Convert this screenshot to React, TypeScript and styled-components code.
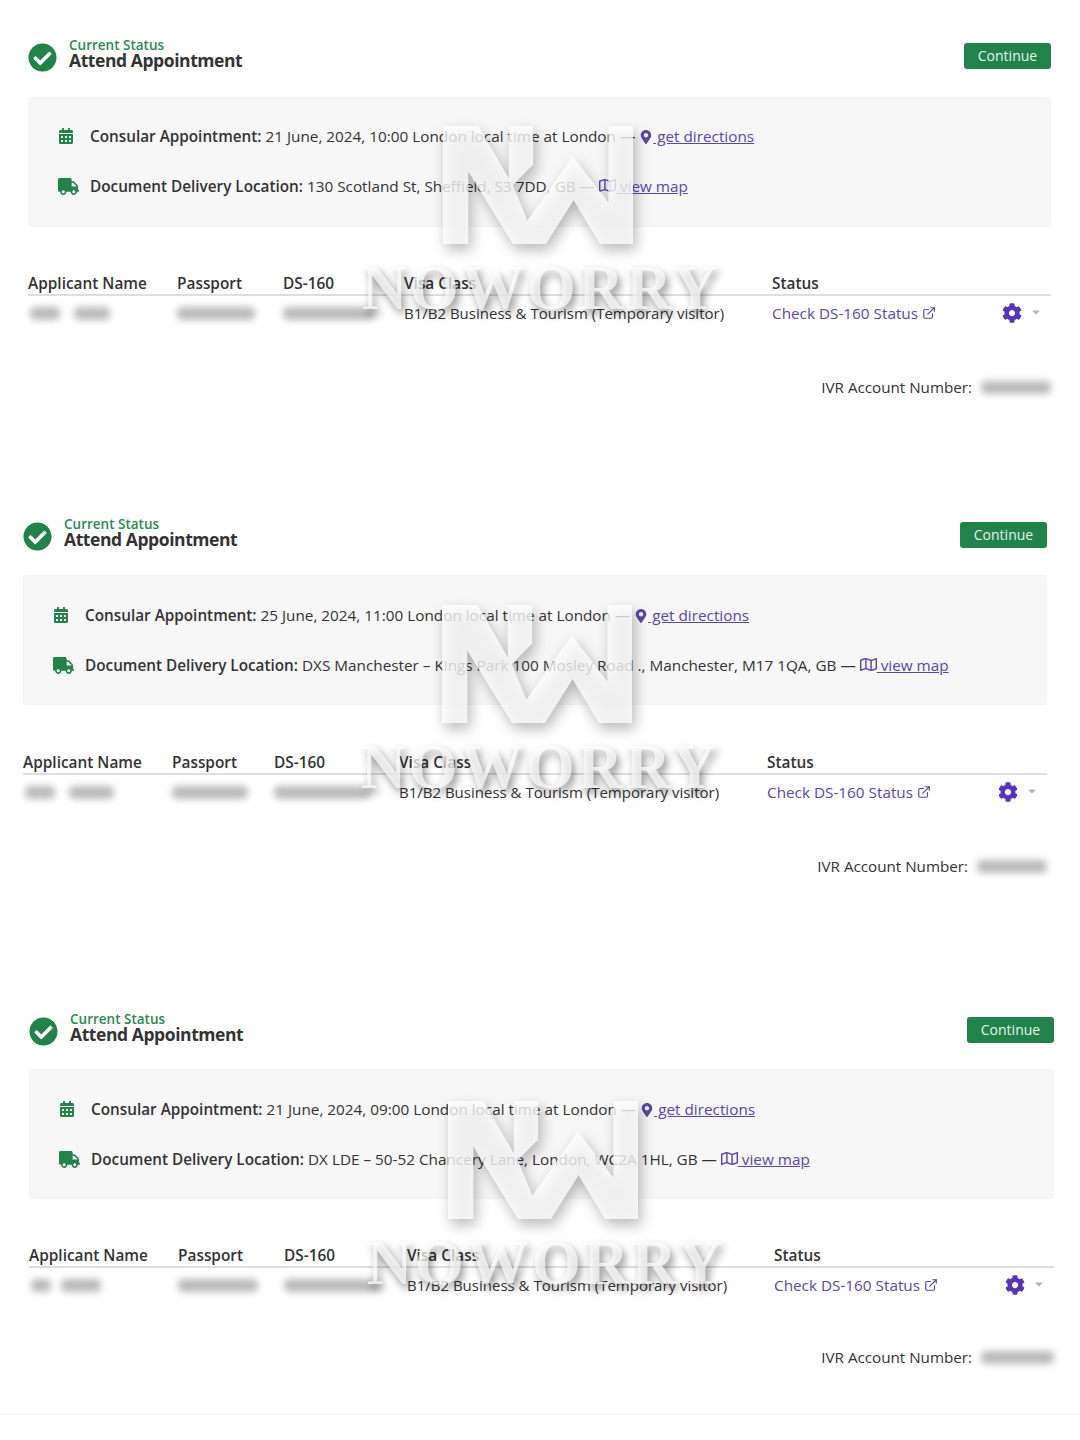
import React from "react";
import styled, { createGlobalStyle } from "styled-components";
import {
  FaCalendarAlt,
  FaCaretDown,
  FaCheckCircle,
  FaCog,
  FaMapMarkerAlt,
  FaRegMap,
  FaTruck,
} from "react-icons/fa";
import { ExternalLink } from "lucide-react";

const GlobalStyle = createGlobalStyle`
  html, body {
    margin: 0;
    padding: 0;
    background: #fff;
  }
  body {
    font-family: "Open Sans", "Noto Sans", sans-serif;
    color: #333;
  }
`;

const StyledPage = styled.div`
  position: relative;
  width: 1080px;
  height: 1440px;
  overflow: hidden;
  padding-top: 38px;
  box-sizing: border-box;
`;

const StyledSection = styled.section<{ $left: number; $width: number; $height: number }>`
  position: relative;
  margin-left: ${(p) => p.$left}px;
  width: ${(p) => p.$width}px;
  height: ${(p) => p.$height}px;
`;

const StyledHeader = styled.div`
  display: flex;
  align-items: center;
  justify-content: space-between;
  height: 38px;
`;

const StyledHeading = styled.div`
  display: flex;
  align-items: center;
  gap: 12px;
  color: #21824a;
`;

const StyledTitleBlock = styled.div`
  display: flex;
  flex-direction: column;
  padding-bottom: 7px;
`;

const StyledEyebrow = styled.span`
  font-size: 13.5px;
  line-height: 13px;
  font-weight: 600;
  color: #2b8a52;
`;

const StyledTitle = styled.span`
  font-size: 17.5px;
  line-height: 17px;
  font-weight: 700;
  letter-spacing: -0.42px;
  color: #333;
`;

const StyledButton = styled.button`
  width: 87px;
  height: 26px;
  border: 0;
  border-radius: 3px;
  background: #21824a;
  color: #e6f5ea;
  font: 400 14px "Open Sans", sans-serif;
  padding: 0;
  margin-top: -3px;
`;

const StyledPanel = styled.div<{ $top: number; $pad: number }>`
  margin-top: ${(p) => p.$top}px;
  height: 130px;
  box-sizing: border-box;
  padding: ${(p) => p.$pad}px 29px 0;
  background: #f7f7f7;
  border: 1px solid #f3f3f3;
  border-radius: 4px;
  display: flex;
  flex-direction: column;
  gap: 16px;
`;

const StyledInfoRow = styled.div`
  display: flex;
  align-items: center;
  height: 34px;
  font-size: 15.3px;
  white-space: pre;
`;

const StyledInfoIcon = styled.span`
  display: flex;
  width: 32px;
  color: #21824a;
  font-size: 16px;
`;

const StyledInfoIconWide = styled(StyledInfoIcon)`
  font-size: 21px;
`;

const StyledStrong = styled.strong`
  font-weight: 600;
`;

const StyledLink = styled.span<{ $iconSize: number }>`
  color: #5a45b0;
  text-decoration: underline;
  svg {
    font-size: ${(p) => p.$iconSize}px;
    vertical-align: -2px;
  }
`;

const StyledTable = styled.div<{ $cols: string; $top: number }>`
  margin-top: ${(p) => p.$top}px;
  display: grid;
  grid-template-columns: ${(p) => p.$cols};
  font-size: 15px;
`;

const StyledHeadCell = styled.div`
  height: 23px;
  line-height: 25px;
  font-weight: 600;
  font-size: 15.4px;
  border-bottom: 2px solid #dedede;
`;

const StyledCell = styled.div`
  height: 34px;
  display: flex;
  align-items: center;
  white-space: nowrap;
`;

const StyledStatusCell = styled(StyledCell)`
  justify-content: space-between;
  color: #5a45b0;
  padding-right: 9px;
`;

const StyledStatusLink = styled.span`
  display: flex;
  align-items: center;
  gap: 4px;
  font-size: 15.3px;
`;

const StyledActions = styled.span`
  display: flex;
  align-items: center;
  gap: 8px;
  color: #5633b8;
  font-size: 20px;
`;

const StyledCaret = styled.span`
  display: flex;
  color: #b5b5b5;
  font-size: 12px;
  margin-top: -2px;
`;

const StyledBlur = styled.span<{ $width: number }>`
  display: inline-block;
  width: ${(p) => p.$width}px;
  height: 13px;
  background: #bababa;
  border-radius: 5px;
  filter: blur(3.5px);
`;

const StyledBlurGroup = styled.span<{ $gap: number }>`
  display: flex;
  gap: ${(p) => p.$gap}px;
  padding-left: 2px;
`;

const StyledIvr = styled.div<{ $top: number }>`
  margin-top: ${(p) => p.$top}px;
  display: flex;
  justify-content: flex-end;
  align-items: center;
  gap: 9px;
  font-size: 15.2px;
`;

const StyledMark = styled.div<{ $left: number; $top: number }>`
  position: absolute;
  left: ${(p) => p.$left}px;
  top: ${(p) => p.$top}px;
  width: 360px;
  display: flex;
  flex-direction: column;
  align-items: center;
  pointer-events: none;
`;

const StyledLogo = styled.svg`
  width: 190px;
  height: 120px;
  margin-right: 7px;
  filter: drop-shadow(3px 6px 7px rgba(0, 0, 0, 0.35));
`;

const StyledMarkText = styled.div`
  margin-top: 13px;
  font: 700 63px/60px "Liberation Serif", serif;
  letter-spacing: 2.5px;
  color: rgba(255, 255, 255, 0.72);
  text-shadow: 3px 5px 8px rgba(0, 0, 0, 0.42);
  white-space: nowrap;
`;

const StyledFooterRule = styled.div`
  position: absolute;
  left: 0;
  right: 0;
  top: 1413px;
  height: 2px;
  background: #f6f6f6;
`;

type TLine = { label: string; value: string; link: "directions" | "map" };

interface ISection {
  left: number;
  width: number;
  height: number;
  panelTop: number;
  panelPad: number;
  tableTop: number;
  ivrTop: number;
  cols: string;
  appointment: string;
  delivery: string;
  nameBlur: number[];
  nameGap: number;
  passportBlur: number;
  dsBlur: number;
  ivrBlur: number;
  markLeft: number;
  markTop: number;
}

const sections: ISection[] = [
  {
    left: 28,
    width: 1023,
    height: 479,
    panelTop: 21,
    panelPad: 21,
    tableTop: 44,
    ivrTop: 47,
    cols: "149px 106px 121px 368px 1fr",
    appointment: "21 June, 2024, 10:00 London local time at London — ",
    delivery: "130 Scotland St, Sheffield, S3 7DD, GB — ",
    nameBlur: [30, 36],
    nameGap: 14,
    passportBlur: 78,
    dsBlur: 92,
    ivrBlur: 70,
    markLeft: 333,
    markTop: 87,
  },
  {
    left: 23,
    width: 1024,
    height: 495,
    panelTop: 20,
    panelPad: 22,
    tableTop: 45,
    ivrTop: 47,
    cols: "149px 102px 125px 368px 1fr",
    appointment: "25 June, 2024, 11:00 London local time at London — ",
    delivery: "DXS Manchester – Kings Park 100 Mosley Road ., Manchester, M17 1QA, GB — ",
    nameBlur: [30, 45],
    nameGap: 14,
    passportBlur: 76,
    dsBlur: 96,
    ivrBlur: 70,
    markLeft: 337,
    markTop: 87,
  },
  {
    left: 29,
    width: 1025,
    height: 400,
    panelTop: 19,
    panelPad: 22,
    tableTop: 44,
    ivrTop: 45,
    cols: "149px 106px 123px 367px 1fr",
    appointment: "21 June, 2024, 09:00 London local time at London — ",
    delivery: "DX LDE – 50-52 Chancery Lane, London, WC2A 1HL, GB — ",
    nameBlur: [20, 40],
    nameGap: 10,
    passportBlur: 80,
    dsBlur: 96,
    ivrBlur: 73,
    markLeft: 337,
    markTop: 88,
  },
];

const Watermark = ({ left, top }: { left: number; top: number }) => (
  <StyledMark $left={left} $top={top}>
    <StyledLogo viewBox="55 35 563 350">
      <polygon
        fill="#fff"
        fillOpacity={0.78}
        points="55,35 160,35 250,190 250,35 322,35 322,150 262,210 305,315 440,125 545,262 545,35 618,35 618,385 520,385 442,255 360,385 262,385 130,170 130,385 55,385"
      />
    </StyledLogo>
    <StyledMarkText>NOWORRY</StyledMarkText>
  </StyledMark>
);

const InfoLine = ({ label, value, link }: TLine) => (
  <StyledInfoRow>
    {link === "directions" ? (
      <StyledInfoIcon>
        <FaCalendarAlt />
      </StyledInfoIcon>
    ) : (
      <StyledInfoIconWide>
        <FaTruck />
      </StyledInfoIconWide>
    )}
    <span>
      <StyledStrong>{label}</StyledStrong> {value}
      {link === "directions" ? (
        <StyledLink $iconSize={14}>
          <FaMapMarkerAlt /> get directions
        </StyledLink>
      ) : (
        <StyledLink $iconSize={17}>
          <FaRegMap /> view map
        </StyledLink>
      )}
    </span>
  </StyledInfoRow>
);

const AppointmentSection = ({ section }: { section: ISection }) => (
  <StyledSection $left={section.left} $width={section.width} $height={section.height}>
    <StyledHeader>
      <StyledHeading>
        <FaCheckCircle size={29} />
        <StyledTitleBlock>
          <StyledEyebrow>Current Status</StyledEyebrow>
          <StyledTitle>Attend Appointment</StyledTitle>
        </StyledTitleBlock>
      </StyledHeading>
      <StyledButton>Continue</StyledButton>
    </StyledHeader>
    <StyledPanel $top={section.panelTop} $pad={section.panelPad}>
      <InfoLine label="Consular Appointment:" value={section.appointment} link="directions" />
      <InfoLine label="Document Delivery Location:" value={section.delivery} link="map" />
    </StyledPanel>
    <StyledTable $cols={section.cols} $top={section.tableTop}>
      <StyledHeadCell>Applicant Name</StyledHeadCell>
      <StyledHeadCell>Passport</StyledHeadCell>
      <StyledHeadCell>DS-160</StyledHeadCell>
      <StyledHeadCell>Visa Class</StyledHeadCell>
      <StyledHeadCell>Status</StyledHeadCell>
      <StyledCell>
        <StyledBlurGroup $gap={section.nameGap}>
          {section.nameBlur.map((w, i) => (
            <StyledBlur key={i} $width={w} />
          ))}
        </StyledBlurGroup>
      </StyledCell>
      <StyledCell>
        <StyledBlur $width={section.passportBlur} />
      </StyledCell>
      <StyledCell>
        <StyledBlur $width={section.dsBlur} />
      </StyledCell>
      <StyledCell>B1/B2 Business &amp; Tourism (Temporary visitor)</StyledCell>
      <StyledStatusCell>
        <StyledStatusLink>
          Check DS-160 Status <ExternalLink size={14} />
        </StyledStatusLink>
        <StyledActions>
          <FaCog />
          <StyledCaret>
            <FaCaretDown />
          </StyledCaret>
        </StyledActions>
      </StyledStatusCell>
    </StyledTable>
    <StyledIvr $top={section.ivrTop}>
      IVR Account Number:
      <StyledBlur $width={section.ivrBlur} />
    </StyledIvr>
    <Watermark left={section.markLeft} top={section.markTop} />
  </StyledSection>
);

const App = () => (
  <StyledPage>
    <GlobalStyle />
    {sections.map((section) => (
      <AppointmentSection key={section.left} section={section} />
    ))}
    <StyledFooterRule />
  </StyledPage>
);

export default App;
